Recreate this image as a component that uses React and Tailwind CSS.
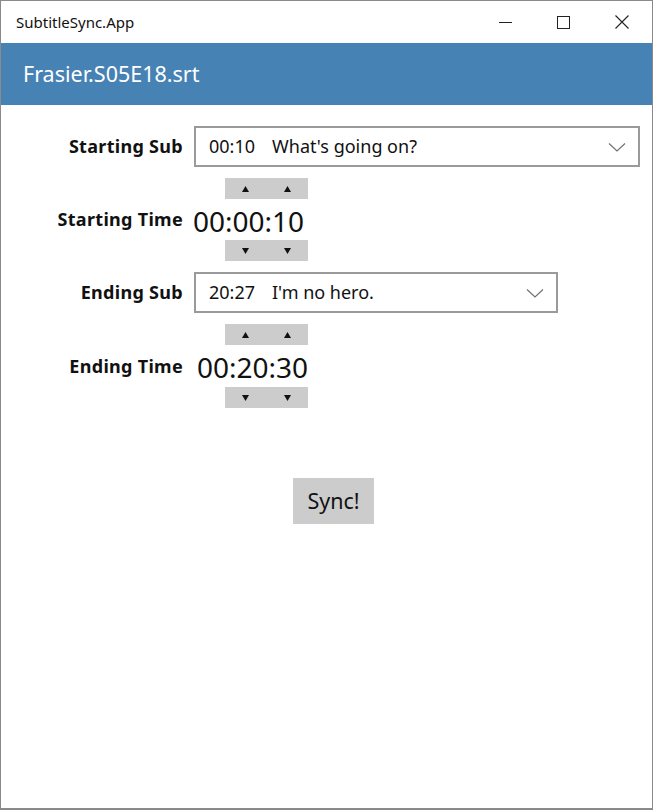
import { useState } from 'react';

const font = { fontFamily: '"Noto Sans", "Open Sans", sans-serif' };

function Chevron() {
  return (
    <svg width="18" height="10" viewBox="0 0 18 10" className="text-[#6e6e6e]">
      <path d="M1 1.5 L9 9 L17 1.5" fill="none" stroke="currentColor" strokeWidth="1.1" />
    </svg>
  );
}

function Arrow({ down }) {
  return (
    <svg width="7" height="6" viewBox="0 0 7 6">
      {down ? <path d="M0 0 H7 L3.5 6 Z" fill="#111" /> : <path d="M0 6 H7 L3.5 0 Z" fill="#111" />}
    </svg>
  );
}

function Spinner({ down }) {
  return (
    <div className="ml-[31px] flex h-[21px] w-[83px] bg-[#cccccc]">
      <button className="flex flex-1 items-center justify-center"><Arrow down={down} /></button>
      <button className="flex flex-1 items-center justify-center"><Arrow down={down} /></button>
    </div>
  );
}

function Combo({ time, text, width }) {
  return (
    <div className={`flex h-[41px] items-center justify-between border-2 border-[#9a9a9a] bg-white pl-[13px] pr-[12px] ${width}`}>
      <span className="text-[18px] text-[#111]">
        <span className="mr-[17px]">{time}</span>{text}
      </span>
      <Chevron />
    </div>
  );
}

function Label({ children, className = '' }) {
  return <div className={`text-right text-[18px] font-bold tracking-[0.3px] text-[#111] ${className}`}>{children}</div>;
}

export default function App() {
  const [start] = useState('00:00:10');
  const [end] = useState('00:20:30');

  return (
    <div className="flex h-[810px] w-[653px] flex-col border border-b-2 border-[#8a8a8a] bg-white" style={font}>
      {/* title bar */}
      <div className="flex h-[42px] items-center justify-between pl-[15px]">
        <span className="text-[15px] text-[#111]">SubtitleSync.App</span>
        <div className="flex h-full">
          <button className="flex w-[58px] items-center justify-center">
            <div className="h-px w-[13px] bg-[#222]" />
          </button>
          <button className="flex w-[58px] items-center justify-center">
            <div className="h-[13px] w-[13px] border border-[#222]" />
          </button>
          <button className="flex w-[60px] items-center justify-center">
            <svg width="14" height="14" viewBox="0 0 14 14">
              <path d="M0.5 0.5 L13.5 13.5 M13.5 0.5 L0.5 13.5" stroke="#222" strokeWidth="1.1" />
            </svg>
          </button>
        </div>
      </div>

      <div className="flex h-[62px] items-center bg-[#4682b4] pl-[22px]">
        <span className="text-[21.5px] text-white">Frasier.S05E18.srt</span>
      </div>

      <div className="grid grid-cols-[182px_auto] items-center gap-x-[11px] pt-[21px]">
        <Label>Starting Sub</Label>
        <Combo time="00:10" text="What's going on?" width="w-[446px]" />

        <div />
        <div className="mt-[11px]"><Spinner /></div>

        <Label>Starting Time</Label>
        <div className="-ml-[1px] flex h-[41px] items-center pt-[2px] text-[28px] text-[#111]">{start}</div>

        <div />
        <Spinner down />

        <Label className="mt-[11px]">Ending Sub</Label>
        <div className="mt-[11px]"><Combo time="20:27" text="I'm no hero." width="w-[364px]" /></div>

        <div />
        <div className="mt-[11px]"><Spinner /></div>

        <Label>Ending Time</Label>
        <div className="ml-[3px] flex h-[42px] items-center pt-[2px] text-[28px] text-[#111]">{end}</div>

        <div />
        <Spinner down />
      </div>

      <div className="mt-[70px] flex justify-center">
        <button className="ml-[14px] h-[46px] w-[81px] bg-[#cccccc] text-[21.5px] text-[#111]">Sync!</button>
      </div>
    </div>
  );
}
